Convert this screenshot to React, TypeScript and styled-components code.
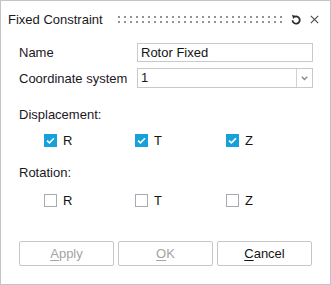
import React from "react";
import styled, { createGlobalStyle } from "styled-components";

const Global = createGlobalStyle`
  html, body { margin: 0; padding: 0; background: #ffffff; }
  body { font-family: "Liberation Sans", Arial, sans-serif; font-size: 13px; color: #1a1a1a; }
  * { box-sizing: border-box; }
`;

const Window = styled.div`
  width: 331px;
  height: 285px;
  border: 1px solid #c4c4c4;
  background: #fff;
  display: flex;
  flex-direction: column;
`;

const TitleBar = styled.div`
  height: 37px;
  display: flex;
  align-items: center;
  padding: 0 9px 0 7px;
`;

const Title = styled.span`
  font-size: 13px;
  line-height: 15px;
  color: #1b1724;
  white-space: nowrap;
`;

const Grip = styled.div`
  flex: 1;
  height: 7px;
  margin: 0 7px 0 15px;
  background-image: radial-gradient(#8f8f8f 0, #8f8f8f 0);
  background:
    linear-gradient(#ffffff, #ffffff) 0 2px / 100% 3px no-repeat,
    repeating-linear-gradient(90deg, #929292 0 2px, transparent 2px 6px);
`;

const IconBtn = styled.span`
  display: inline-flex;
  align-items: center;
  justify-content: center;
  width: ${(p: { $w: number }) => p.$w}px;
  height: 14px;
  color: #333;
`;

const Body = styled.div`
  padding: 0 17px 0 18px;
  display: flex;
  flex-direction: column;
`;

const FormGrid = styled.div`
  margin-top: 5px;
  display: grid;
  grid-template-columns: 118px 1fr;
  row-gap: 6px;
  align-items: center;
`;

const Label = styled.label`
  line-height: 15px;
  color: #1b1724;
  white-space: nowrap;
`;

const TextInput = styled.div`
  height: 19px;
  border: 1px solid #c9c9c9;
  padding: 0 3px;
  line-height: 17px;
  color: #141414;
`;

const Select = styled.div`
  height: 20px;
  border: 1px solid #c9c9c9;
  display: flex;
  align-items: stretch;
  line-height: 18px;
`;

const SelectValue = styled.span`
  flex: 1;
  padding: 0 3px;
`;

const SelectArrow = styled.span`
  width: 16px;
  border-left: 1px solid #d0d0d0;
  display: flex;
  align-items: center;
  justify-content: center;
`;

const SectionLabel = styled.div<{ $mt: number }>`
  margin-top: ${(p) => p.$mt}px;
  line-height: 15px;
  color: #1b1724;
`;

const CheckRow = styled.div<{ $mt: number }>`
  margin-top: ${(p) => p.$mt}px;
  padding-left: 25px;
  display: grid;
  grid-template-columns: 91px 91px 91px;
  height: 13px;
`;

const CheckItem = styled.div`
  display: flex;
  align-items: center;
  gap: 6px;
  height: 13px;
`;

const Box = styled.span<{ $on: boolean }>`
  width: 13px;
  height: 13px;
  flex: none;
  display: flex;
  align-items: center;
  justify-content: center;
  background: ${(p) => (p.$on ? "#16a1dc" : "#fff")};
  border: 1px solid ${(p) => (p.$on ? "#16a1dc" : "#a9a9b1")};
`;

const CheckText = styled.span`
  line-height: 15px;
  color: #141414;
`;

const Buttons = styled.div`
  margin-top: 34px;
  display: grid;
  grid-template-columns: repeat(3, 95px);
  column-gap: 4px;
`;

const Button = styled.button<{ $disabled?: boolean }>`
  height: 25px;
  border: 1px solid #c6c6c6;
  border-radius: 2px;
  background: #fff;
  font-family: "Liberation Sans", Arial, sans-serif;
  font-size: 13px;
  color: ${(p) => (p.$disabled ? "#a3a3a3" : "#141414")};
  padding: 0;
  u { text-decoration-thickness: 1px; text-underline-offset: 2px; }
`;

const Check = ({ on, label }: { on: boolean; label: string }) => (
  <CheckItem>
    <Box $on={on}>
      {on && (
        <svg width="9" height="7" viewBox="0 0 9 7">
          <path d="M1 3.6 L3.4 5.8 L8 1.2" stroke="#fff" strokeWidth="1.6" fill="none" />
        </svg>
      )}
    </Box>
    <CheckText>{label}</CheckText>
  </CheckItem>
);

export default function App() {
  return (
    <>
      <Global />
      <Window>
        <TitleBar>
          <Title>Fixed Constraint</Title>
          <Grip />
          <IconBtn $w={11}>
            <svg width="10" height="11" viewBox="0 0 10 11">
              <path d="M3.2 3 A3.6 3.6 0 1 1 1.5 6.2" stroke="#2a2a2a" strokeWidth="1.8" fill="none" />
              <path d="M1 0.8 L4.6 2.1 L2.2 5 Z" fill="#2a2a2a" />
            </svg>
          </IconBtn>
          <IconBtn $w={14} style={{ marginLeft: 6 }}>
            <svg width="9" height="9" viewBox="0 0 9 9">
              <path d="M0.8 0.8 L8.2 8.2 M8.2 0.8 L0.8 8.2" stroke="#4a4a4a" strokeWidth="1.1" fill="none" />
            </svg>
          </IconBtn>
        </TitleBar>
        <Body>
          <FormGrid>
            <Label>Name</Label>
            <TextInput>Rotor Fixed</TextInput>
            <Label>Coordinate system</Label>
            <Select>
              <SelectValue>1</SelectValue>
              <SelectArrow>
                <svg width="7" height="5" viewBox="0 0 7 5">
                  <path d="M0.8 0.8 L3.5 3.6 L6.2 0.8" stroke="#8a8a8a" strokeWidth="1.4" fill="none" />
                </svg>
              </SelectArrow>
            </Select>
          </FormGrid>
          <SectionLabel $mt={19}>Displacement:</SectionLabel>
          <CheckRow $mt={12}>
            <Check on label="R" />
            <Check on label="T" />
            <Check on label="Z" />
          </CheckRow>
          <SectionLabel $mt={18}>Rotation:</SectionLabel>
          <CheckRow $mt={14}>
            <Check on={false} label="R" />
            <Check on={false} label="T" />
            <Check on={false} label="Z" />
          </CheckRow>
          <Buttons>
            <Button $disabled><u>A</u>pply</Button>
            <Button $disabled><u>O</u>K</Button>
            <Button><u>C</u>ancel</Button>
          </Buttons>
        </Body>
      </Window>
    </>
  );
}
